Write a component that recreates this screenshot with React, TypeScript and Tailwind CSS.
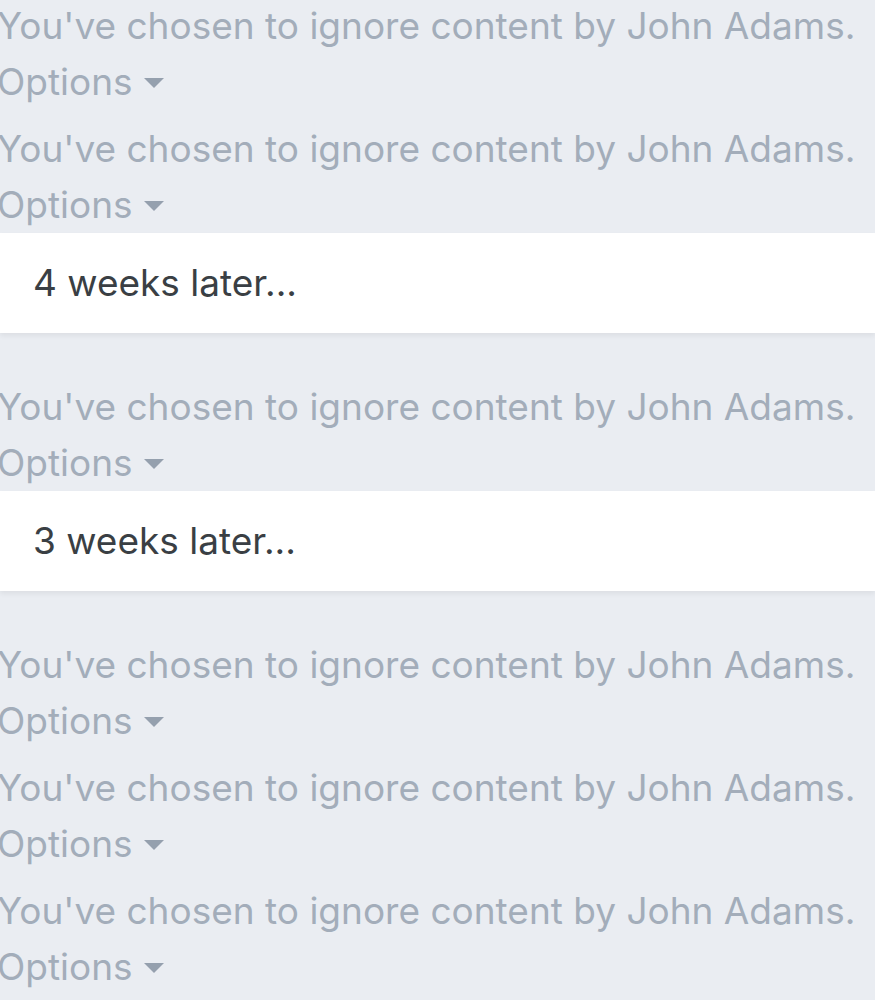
import React from "react";

function Ignored() {
  return (
    <div className="h-[123px] pt-[11px] text-[#a3adba]">
      <div className="h-[56px] leading-[56px] whitespace-nowrap -ml-[3px]">You've chosen to ignore content by John Adams.</div>
      <div className="flex items-center h-[56px] -ml-[3px]">
        <span className="leading-[56px]">Options</span>
        <svg width="20" height="10" viewBox="0 0 20 10" className="ml-[11px] mt-[1px]">
          <path d="M0 0 H20 L10 10 Z" fill="#95a0ae" />
        </svg>
      </div>
    </div>
  );
}

function Later({ text }: { text: string }) {
  return (
    <div className="h-[100px] bg-white flex items-center pl-[33px] text-[#3a3f44] shadow-[0_3px_5px_rgba(0,0,0,0.06)] mb-[35px] relative">
      {text}
    </div>
  );
}

export default function App() {
  return (
    <div
      className="w-[875px] h-[1000px] overflow-hidden bg-[#eaedf2] text-[37px]"
      style={{ fontFamily: "Inter, 'Noto Sans', sans-serif" }}
    >
      <div className="-mt-[13px]">
        <Ignored />
        <Ignored />
        <Later text="4 weeks later..." />
        <Ignored />
        <Later text="3 weeks later..." />
        <Ignored />
        <Ignored />
        <Ignored />
      </div>
    </div>
  );
}
